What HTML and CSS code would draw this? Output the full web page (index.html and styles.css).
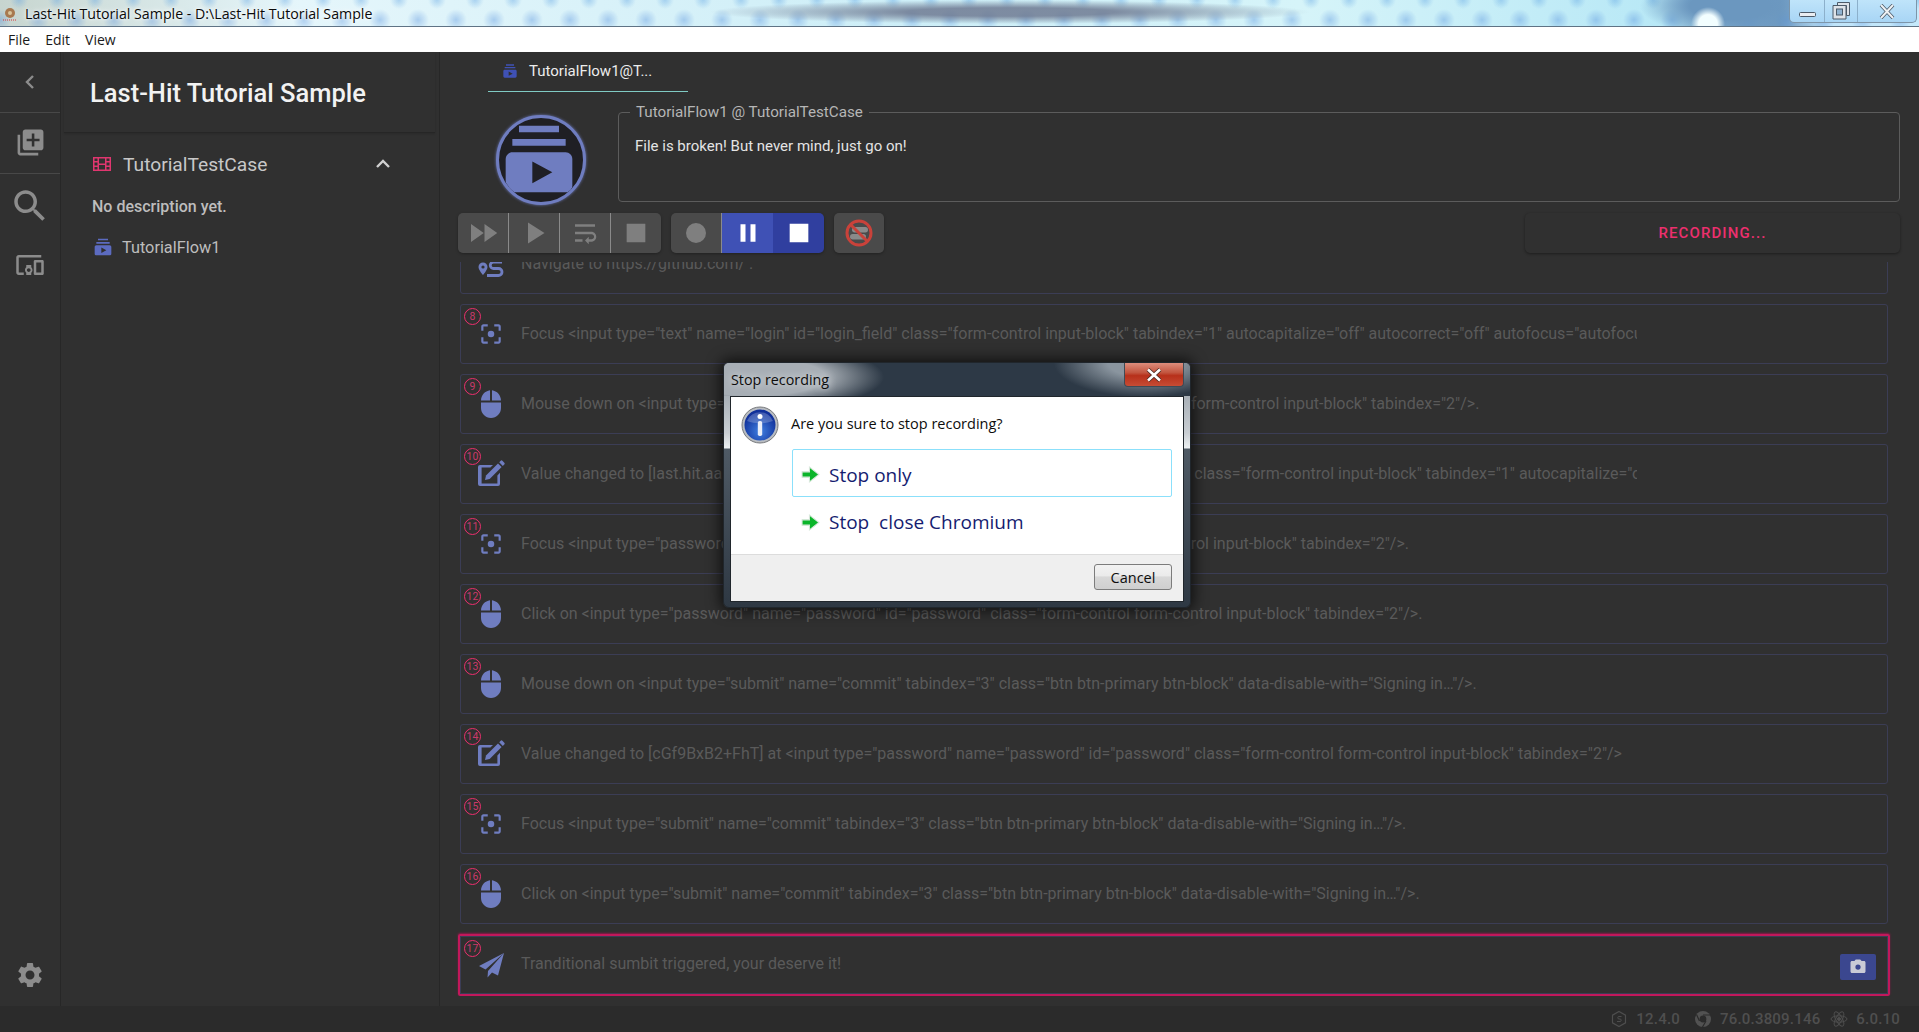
FILE: index.html
```html
<!DOCTYPE html>
<html lang="en">
<head>
<meta charset="utf-8">
<title>Last-Hit Tutorial Sample</title>
<link rel="stylesheet" href="styles.css">
</head>
<body>
<svg class="defs" width="0" height="0" aria-hidden="true">
  <symbol id="i-flow" viewBox="0 0 24 24"><path d="M20 8H4V6h16v2zm-2-6H6v2h12V2zm4 10v8c0 1.1-.9 2-2 2H4c-1.1 0-2-.9-2-2v-8c0-1.1.9-2 2-2h16c1.1 0 2 .9 2 2zm-6 4l-6-3.27v6.53L16 16z"/></symbol>
  <symbol id="i-focus" viewBox="0 0 24 24"><path d="M5 15H3v4c0 1.1.9 2 2 2h4v-2H5v-4zM5 5h4V3H5c-1.1 0-2 .9-2 2v4h2V5zm14-2h-4v2h4v4h2V5c0-1.1-.9-2-2-2zm0 16h-4v2h4c1.1 0 2-.9 2-2v-4h-2v4z"/><circle cx="12" cy="12" r="3"/></symbol>
  <symbol id="i-mouse" viewBox="0 0 20 28"><path d="M11 0.2C16 1 19.8 4.800 20 10.500H11zM9 0.200V10.500H0C0.200 4.800 4 1 9 0.200zM0 12.500H20V18C20 23.500 15.500 28 10 28S0 23.500 0 18z"/></symbol>
  <symbol id="i-edit" viewBox="0 0 28 28"><path d="M3 6h13l-2.600 2.600H4.600v15.800h15.800v-8l2.600-2.600V25a2 2 0 0 1-2 2H3a2 2 0 0 1-2-2V8a2 2 0 0 1 2-2z"/><path d="M9 16.500L21 4.500l3.600 3.600L12.600 20.100l-4.600 1z"/><path d="M22.200 3.300l1.500-1.500a1.200 1.200 0 0 1 1.700 0l1.900 1.900a1.200 1.200 0 0 1 0 1.700l-1.500 1.500z"/></symbol>
  <symbol id="i-plane" viewBox="0 0 26 26"><path d="M25 1L0 14l6.500 3.500L25 1zM25 1L9 19l-0.500 6.500 4.500-5 6 3z"/></symbol>
</svg>

<header class="titlebar">
  <svg class="app-icon" viewBox="0 0 16 16"><circle cx="8" cy="8" r="5" fill="#a8794f"/><circle cx="8" cy="8" r="2" fill="#d9c49a"/><path d="M1 15h14" stroke="#d33" stroke-dasharray="1 1"/></svg>
  <span class="title-text">Last-Hit Tutorial Sample - D:\Last-Hit Tutorial Sample</span>
  <div class="win-buttons">
    <span class="win-btn win-min"><svg width="17" height="6" viewBox="0 0 17 6"><rect x="0.500" y="0.500" width="16" height="4" rx="1" fill="#e9edf2" stroke="#4c5a68"/></svg></span>
    <span class="win-btn win-max"><svg width="18" height="18" viewBox="0 0 18 18"><path d="M5.500 0.500h12v13h-3v-10h-9z" fill="#dde2e8" stroke="#4c5a68"/><path d="M1 3.500h13v13.500H1z" fill="#dde2e8" stroke="#4c5a68"/><rect x="4.500" y="7" width="6" height="6" fill="#8fb2d0" stroke="#4c5a68"/></svg></span>
    <span class="win-btn win-close"><svg width="16" height="15" viewBox="0 0 16 15"><path d="M2 1l12 13M14 1L2 14" fill="none" stroke="#4c5a68" stroke-width="3.600"/><path d="M2 1l12 13M14 1L2 14" fill="none" stroke="#eef1f4" stroke-width="2"/></svg></span>
  </div>
</header>

<nav class="menubar"><span>File</span><span>Edit</span><span>View</span></nav>

<div class="app">
  <aside class="rail">
    <div class="rail-item rail-back"><svg width="24" height="24" viewBox="0 0 24 24"><path d="M15 6l-6 6 6 6" fill="none" stroke="#8c8c8c" stroke-width="2.400"/></svg></div>
    <div class="rail-item rail-add"><svg width="31" height="31" viewBox="0 0 24 24"><path d="M4 6H2v14c0 1.100.9 2 2 2h14v-2H4V6zm16-4H8c-1.100 0-2 .9-2 2v12c0 1.100.9 2 2 2h12c1.100 0 2-.9 2-2V4c0-1.100-.9-2-2-2zm-1 9h-4v4h-2v-4H9V9h4V5h2v4h4v2z"/></svg></div>
    <div class="rail-item rail-search"><svg width="42" height="42" viewBox="0 0 24 24"><path d="M15.500 14h-.79l-.28-.27C15.410 12.590 16 11.110 16 9.500 16 5.910 13.090 3 9.500 3S3 5.910 3 9.500 5.910 16 9.500 16c1.610 0 3.090-.59 4.230-1.570l.27.28v.79l5 4.990L20.490 19l-4.990-5zm-6 0C7.010 14 5 11.990 5 9.500S7.010 5 9.500 5 14 7.010 14 9.500 11.990 14 9.500 14z"/></svg></div>
    <div class="rail-item rail-devices"><svg width="30" height="30" viewBox="0 0 24 24"><path d="M3 6h18V4H3c-1.100 0-2 .9-2 2v12c0 1.100.9 2 2 2h4v-2H3V6zm10 6H9v1.780c-.61.550-1 1.330-1 2.220s.39 1.670 1 2.220V20h4v-1.780c.61-.55 1-1.340 1-2.220s-.39-1.670-1-2.220V12zm-2 5.500c-.83 0-1.500-.67-1.500-1.500s.67-1.500 1.500-1.500 1.500.67 1.500 1.500-.67 1.500-1.500 1.500zM22 8h-6c-.5 0-1 .5-1 1v10c0 .5.5 1 1 1h6c.5 0 1-.5 1-1V9c0-.5-.5-1-1-1zm-1 10h-4v-8h4v8z"/></svg></div>
    <div class="rail-item rail-settings"><svg width="30" height="30" viewBox="0 0 24 24"><path d="M19.140 12.940c.04-.3.06-.61.06-.94 0-.32-.02-.64-.07-.94l2.030-1.580c.18-.14.23-.41.12-.61l-1.920-3.320c-.12-.22-.37-.29-.59-.22l-2.390.96c-.5-.38-1.030-.7-1.620-.94l-.36-2.540c-.04-.24-.24-.41-.48-.41h-3.840c-.24 0-.43.17-.47.41l-.36 2.540c-.59.24-1.130.57-1.620.94l-2.390-.96c-.22-.08-.47 0-.59.22L2.740 8.870c-.12.210-.08.47.12.61l2.030 1.580c-.05.3-.09.63-.09.94s.02.64.07.94l-2.030 1.580c-.18.14-.23.41-.12.61l1.920 3.320c.12.220.37.290.59.220l2.390-.96c.5.38 1.030.7 1.620.94l.36 2.540c.05.24.24.41.48.41h3.840c.24 0 .44-.17.47-.41l.36-2.540c.59-.24 1.130-.56 1.620-.94l2.390.96c.22.08.47 0 .59-.22l1.920-3.320c.12-.22.07-.47-.12-.61l-2.010-1.580zM12 15.600c-1.980 0-3.600-1.620-3.600-3.600s1.620-3.600 3.600-3.600 3.600 1.620 3.600 3.600-1.620 3.600-3.600 3.600z"/></svg></div>
  </aside>

  <section class="panel">
    <h1 class="panel-title">Last-Hit Tutorial Sample</h1>
    <div class="case-row">
      <svg class="case-icon" viewBox="0 0 18 14"><path d="M0 0h18v14H0zM1.500 1.500v2.500h3V1.500zm0 4v3h3v-3zm0 4.500v2.500h3V10zm12-8.500v2.500h3V1.500zm0 4v3h3v-3zm0 4.500v2.500h3V10zM6 1.500v5h6v-5zm0 6.500v4.500h6V8z" fill-rule="evenodd"/></svg>
      <span class="case-name">TutorialTestCase</span>
      <svg class="case-chevron" width="24" height="24" viewBox="0 0 24 24"><path d="M6 15l6-6 6 6" fill="none" stroke="#d0d0d0" stroke-width="2.400"/></svg>
    </div>
    <p class="case-desc">No description yet.</p>
    <div class="flow-row">
      <svg class="flow-icon" width="20" height="20"><use href="#i-flow"/></svg>
      <span>TutorialFlow1</span>
    </div>
  </section>

  <main class="main">
    <div class="tabs">
      <div class="tab"><svg class="tab-icon" width="16" height="16"><use href="#i-flow"/></svg><span>TutorialFlow1@T...</span></div>
    </div>
    <div class="head">
      <div class="avatar"><svg width="80" height="80" viewBox="0 0 24 24"><use href="#i-flow"/></svg></div>
      <fieldset class="desc">
        <legend>TutorialFlow1 @ TutorialTestCase</legend>
        <p>File is broken! But never mind, just go on!</p>
      </fieldset>
    </div>
    <div class="toolbar">
      <div class="btn-group">
        <button class="tbtn"><svg width="36" height="36" viewBox="0 0 24 24"><path d="M4 18l8.500-6L4 6v12zm9-12v12l8.500-6L13 6z"/></svg></button>
        <button class="tbtn"><svg width="36" height="36" viewBox="0 0 24 24"><path d="M8 5v14l11-7z"/></svg></button>
        <button class="tbtn"><svg width="30" height="30" viewBox="0 0 24 24"><path d="M4 19h6v-2H4v2zM20 5H4v2h16V5zm-3 6H4v2h13.250c1.100 0 2 .9 2 2s-.9 2-2 2H15v-2l-3 3 3 3v-2h2c2.210 0 4-1.790 4-4s-1.790-4-4-4z"/></svg></button>
        <button class="tbtn"><svg width="28" height="28" viewBox="0 0 24 24"><path d="M4 4h16v16H4z"/></svg></button>
      </div>
      <div class="btn-group">
        <button class="tbtn"><svg width="24" height="24" viewBox="0 0 24 24"><circle cx="12" cy="12" r="10"/></svg></button>
        <button class="tbtn tbtn-pause"><svg width="30" height="30" viewBox="0 0 24 24"><path d="M6 19h4V5H6v14zm8-14v14h4V5h-4z"/></svg></button>
        <button class="tbtn tbtn-stop"><svg width="28" height="28" viewBox="0 0 24 24"><path d="M4 4h16v16H4z"/></svg></button>
      </div>
      <div class="btn-group">
        <button class="tbtn tbtn-block"><svg width="28" height="28" viewBox="0 0 28 28"><rect x="7" y="8" width="16" height="5.500" rx="2.700" fill="#8a8a8a"/><rect x="5" y="15" width="16" height="5.500" rx="2.700" fill="#8a8a8a"/><circle cx="14" cy="14" r="12" fill="none" stroke="#c9423a" stroke-width="3"/><path d="M5.500 5.500l17 17" stroke="#c9423a" stroke-width="3"/></svg></button>
      </div>
      <div class="status-box">RECORDING...</div>
    </div>
    <div class="steps">
      <div class="step"><svg class="step-icon icon-route" width="26" height="18" viewBox="0 0 26 18"><path d="M5 2.500a4.500 4.500 0 0 1 4.500 4.500C9.500 10 5 15 5 15S.5 10 .5 7A4.500 4.500 0 0 1 5 2.500z"/><circle cx="5" cy="7" r="1.600" fill="#303030"/><path d="M24 2H15.500a3 3 0 0 0 0 6.500h5a3 3 0 0 1 0 7H9" fill="none" stroke-width="2.800"/></svg><span class="step-text">Navigate to https://github.com/ .</span></div>
      <div class="step"><span class="badge">8</span><svg class="step-icon icon-focus" width="26" height="26"><use href="#i-focus"/></svg><span class="step-text">Focus &lt;input type="text" name="login" id="login_field" class="form-control input-block" tabindex="1" autocapitalize="off" autocorrect="off" autofocus="autofocus"/&gt;.</span></div>
      <div class="step"><span class="badge">9</span><svg class="step-icon icon-mouse" width="20" height="28"><use href="#i-mouse"/></svg><span class="step-text">Mouse down on &lt;input type="password" name="password" id="password" class="form-control form-control input-block" tabindex="2"/&gt;.</span></div>
      <div class="step"><span class="badge">10</span><svg class="step-icon icon-edit" width="28" height="28"><use href="#i-edit"/></svg><span class="step-text">Value changed to [last.hit.aaron@gmail.com] at &lt;input type="text" name="login" id="login_field" class="form-control input-block" tabindex="1" autocapitalize="off" autocorrect="off"/&gt;</span></div>
      <div class="step"><span class="badge">11</span><svg class="step-icon icon-focus" width="26" height="26"><use href="#i-focus"/></svg><span class="step-text">Focus &lt;input type="password" name="password" id="password" class="form-control form-control input-block" tabindex="2"/&gt;.</span></div>
      <div class="step"><span class="badge">12</span><svg class="step-icon icon-mouse" width="20" height="28"><use href="#i-mouse"/></svg><span class="step-text">Click on &lt;input type="password" name="password" id="password" class="form-control form-control input-block" tabindex="2"/&gt;.</span></div>
      <div class="step"><span class="badge">13</span><svg class="step-icon icon-mouse" width="20" height="28"><use href="#i-mouse"/></svg><span class="step-text">Mouse down on &lt;input type="submit" name="commit" tabindex="3" class="btn btn-primary btn-block" data-disable-with="Signing in…"/&gt;.</span></div>
      <div class="step"><span class="badge">14</span><svg class="step-icon icon-edit" width="28" height="28"><use href="#i-edit"/></svg><span class="step-text">Value changed to [cGf9BxB2+FhT] at &lt;input type="password" name="password" id="password" class="form-control form-control input-block" tabindex="2"/&gt;</span></div>
      <div class="step"><span class="badge">15</span><svg class="step-icon icon-focus" width="26" height="26"><use href="#i-focus"/></svg><span class="step-text">Focus &lt;input type="submit" name="commit" tabindex="3" class="btn btn-primary btn-block" data-disable-with="Signing in…"/&gt;.</span></div>
      <div class="step"><span class="badge">16</span><svg class="step-icon icon-mouse" width="20" height="28"><use href="#i-mouse"/></svg><span class="step-text">Click on &lt;input type="submit" name="commit" tabindex="3" class="btn btn-primary btn-block" data-disable-with="Signing in…"/&gt;.</span></div>
      <div class="step step-current"><span class="badge">17</span><svg class="step-icon icon-plane" width="26" height="26"><use href="#i-plane"/></svg><span class="step-text">Tranditional sumbit triggered, your deserve it!</span>
        <button class="shot"><svg width="18" height="18" viewBox="0 0 24 24"><path fill="#c9cbd6" d="M9 2L7.170 4H4c-1.100 0-2 .9-2 2v12c0 1.100.9 2 2 2h16c1.100 0 2-.9 2-2V6c0-1.100-.9-2-2-2h-3.170L15 2H9z"/><circle cx="12" cy="12" r="3.500" fill="#3b478f"/></svg></button>
      </div>
    </div>
  </main>
</div>

<footer class="statusbar">
  <span class="ver ver-node"><svg width="18" height="18" viewBox="0 0 18 18"><path d="M9 1.500l6.500 3.700v7.600L9 16.500l-6.500-3.700V5.200z" fill="none" stroke="#4e4e4e" stroke-width="1.200"/><path d="M11.500 6.500H9a1.200 1.200 0 0 0 0 2.500h1a1.200 1.200 0 0 1 0 2.500H7" fill="none" stroke="#4e4e4e"/></svg>12.4.0</span>
  <span class="ver"><svg width="18" height="18" viewBox="0 0 18 18"><circle cx="9" cy="9" r="8" fill="#525252"/><circle cx="9" cy="9" r="3.400" fill="#2b2b2b"/><path d="M9 5h7M5.500 11L2.500 4.500M12 11l-3.500 6" stroke="#2b2b2b" stroke-width="1.200"/></svg>76.0.3809.146</span>
  <span class="ver"><svg width="18" height="18" viewBox="0 0 18 18" fill="none" stroke="#4e4e4e" stroke-width="1"><ellipse cx="9" cy="9" rx="8" ry="3.200"/><ellipse cx="9" cy="9" rx="8" ry="3.200" transform="rotate(60 9 9)"/><ellipse cx="9" cy="9" rx="8" ry="3.200" transform="rotate(120 9 9)"/><circle cx="9" cy="9" r="1.500" fill="#4e4e4e"/></svg>6.0.10</span>
</footer>

<div class="dialog">
  <div class="dlg-title"><span>Stop recording</span><span class="dlg-close"><svg width="16" height="14" viewBox="0 0 16 14"><path d="M2 1.500l12 11M14 1.500L2 12.500" stroke="#4b2a22" stroke-width="4.200"/><path d="M2 1.500l12 11M14 1.500L2 12.500" stroke="#fff" stroke-width="2.600"/></svg></span></div>
  <div class="dlg-body">
    <div class="dlg-msg">
      <svg class="dlg-info" width="38" height="38" viewBox="0 0 38 38"><defs><radialGradient id="infoBlue" cx="50%" cy="70%" r="60%"><stop offset="0" stop-color="#3f7fe0"/><stop offset="1" stop-color="#10309a"/></radialGradient></defs><circle cx="19" cy="19" r="18" fill="#b9bdc2" stroke="#77797c"/><circle cx="19" cy="19" r="15.500" fill="url(#infoBlue)"/><path d="M6 15a14 14 0 0 1 26 0c-8 3-18 3-26 0z" fill="#fff" opacity=".22"/><circle cx="19" cy="10.500" r="2.500" fill="#fff"/><rect x="16.800" y="15" width="4.400" height="15" rx="1.800" fill="#e9eef8"/></svg>
      <span>Are you sure to stop recording?</span>
    </div>
    <div class="dlg-link dlg-link-hot"><svg width="19" height="17" viewBox="0 0 18 16"><path d="M1 5.500h7V1l9 7-9 7v-4.500H1z" fill="#0bb52a" stroke="#d9e8dc"/></svg><span>Stop only</span></div>
    <div class="dlg-link"><svg width="19" height="17" viewBox="0 0 18 16"><path d="M1 5.500h7V1l9 7-9 7v-4.500H1z" fill="#0bb52a" stroke="#d9e8dc"/></svg><span>Stop&nbsp; close Chromium</span></div>
    <div class="dlg-foot"><button class="dlg-cancel">Cancel</button></div>
  </div>
</div>
</body>
</html>
```

FILE: styles.css
```css
* { box-sizing: border-box; }
html, body { margin: 0; height: 100%; overflow: hidden; }
body {
  display: flex;
  flex-direction: column;
  font-family: Roboto, "Liberation Sans", sans-serif;
  background: #303030;
  position: relative;
}
.defs { position: absolute; }

.titlebar {
  height: 27px;
  flex: none;
  display: flex;
  align-items: center;
  border-bottom: 1px solid #5f7385;
  position: relative;
  background:
    radial-gradient(circle 17px at 1708px 24px, #f2feff 55%, transparent 100%) no-repeat,
    radial-gradient(ellipse 90px 30px at 1730px 6px, #6b97bf 45%, transparent 100%) no-repeat,
    radial-gradient(ellipse 300px 12px at 1010px 12px, rgba(105,115,140,.8) 35%, transparent 100%) no-repeat,
    radial-gradient(circle 9px at 19px 0, rgba(90,160,225,.4) 0, transparent 100%) 0 0 / 38px 27px repeat-x,
    radial-gradient(circle 11px at 19px 20px, rgba(80,140,220,.38) 0, transparent 100%) 19px 0 / 38px 27px repeat-x,
    linear-gradient(90deg, #c7d5cf 0, #e5f6fb 300px, #cdeef7 900px, #d6f4f9 1300px, #b8e8f6 1660px, #77a5cb 1740px, #6f9bc2 1780px, #bfe4fa 1830px, #c5e9fb 100%);
  font-family: "Open Sans", "Noto Sans", sans-serif;
  font-size: 14.200px;
  color: #0a0a0a;
}
.app-icon { width: 16px; height: 16px; margin-left: 2px; flex: none; }
.title-text { margin-left: 7px; white-space: nowrap; text-shadow: 0 0 6px #fff, 0 0 3px #fff; }
.win-buttons {
  position: absolute;
  right: 2px;
  top: 0;
  height: 23px;
  display: flex;
  border: 1px solid #7d95a9;
  border-top: 0;
  border-radius: 0 0 5px 5px;
  background: linear-gradient(180deg, #bfe4fa, #a8d5f5);
}
.win-btn { display: flex; align-items: center; justify-content: center; border-right: 1px solid #8cb0cb; }
.win-btn:last-child { border-right: 0; }
.win-min { width: 35px; padding-top: 7px; }
.win-max { width: 33px; }
.win-close { width: 58px; }

.menubar {
  height: 25px;
  flex: none;
  background: #fff;
  display: flex;
  align-items: center;
  gap: 15px;
  padding-left: 8px;
  padding-bottom: 1px;
  font-family: "Open Sans", "Noto Sans", sans-serif;
  font-size: 14px;
  color: #1a1a1a;
}

.app { flex: 1; display: flex; min-height: 0; }

.rail {
  width: 61px;
  flex: none;
  display: flex;
  flex-direction: column;
  border-right: 1px solid #272727;
}
.rail svg { fill: #8c8c8c; }
.rail-item { display: flex; align-items: center; justify-content: center; }
.rail-back { height: 61px; border-bottom: 1px solid #484848; }
.rail-add { height: 61px; padding-bottom: 2px; border-bottom: 1px solid #484848; }
.rail-search { height: 63px; }
.rail-devices { height: 56px; }
.rail-settings { margin-top: auto; height: 66px; margin-bottom: -2px; }

.panel {
  width: 379px;
  flex: none;
  border-right: 1px solid #272727;
  display: flex;
  flex-direction: column;
}
.panel-title {
  margin: 0 4px 0 3px;
  height: 81px;
  padding: 23px 0 0 26px;
  font-size: 25.500px;
  line-height: 36px;
  font-weight: 500;
  color: #f2f2f2;
  border-bottom: 1px solid #262626;
  box-shadow: 0 1px 2px rgba(0,0,0,.15);
}
.case-row {
  display: flex;
  align-items: center;
  height: 24px;
  margin-top: 19px;
  padding-left: 32px;
}
.case-icon { fill: #e0366f; flex: none; width: 18px; height: 14px; }
.case-name { margin-left: 12px; font-size: 19.200px; color: #c8c8c8; }
.case-chevron { margin-left: auto; margin-right: 44px; }
.case-desc { margin: 21px 0 0 31px; font-size: 16px; line-height: 20px; font-weight: 500; color: #bdbdbd; }
.flow-row {
  display: flex;
  align-items: center;
  height: 24px;
  margin-top: 18px;
  padding-left: 32px;
  font-size: 16.300px;
  color: #bdbdbd;
}
.flow-icon { fill: #5c6bc0; flex: none; margin-right: 9px; }

.main { flex: 1; min-width: 0; display: flex; flex-direction: column; }

.tabs { height: 40px; flex: none; padding-left: 48px; }
.tab {
  width: 200px;
  height: 40px;
  display: flex;
  align-items: center;
  padding-left: 14px;
  padding-bottom: 2px;
  border-bottom: 1px solid #80cbc4;
  font-size: 15px;
  color: #ececec;
}
.tab-icon { fill: #3f51b5; margin-right: 11px; flex: none; }

.head { height: 121px; flex: none; display: flex; }
.avatar {
  width: 90px;
  height: 90px;
  margin: 23px 0 0 56px;
  flex: none;
  border-radius: 50%;
  border: 3px solid #6f7dc0;
  box-shadow: 0 0 3px #6f7dc0;
  background: #1f1f24;
  display: flex;
  align-items: center;
  justify-content: center;
  overflow: hidden;
}
.avatar svg { fill: #6f7dc0; flex: none; margin: -3px 5px 0 0; }
.desc {
  flex: 1;
  margin: 9px 19px 0 32px;
  height: 101px;
  padding: 13px 16px 0 16px;
  border: 1px solid #5c5c5c;
  border-radius: 4px;
  min-width: 0;
}
.desc legend { padding: 0 6px; margin-left: -5px; font-size: 15.200px; color: #b6b6b6; line-height: 22px; }
.desc p { margin: 0; font-size: 15px; line-height: 20px; color: #e4e4e4; }

.toolbar { height: 40px; flex: none; display: flex; gap: 10px; padding: 0 19px 0 18px; }
.btn-group { display: flex; border-radius: 5px; overflow: hidden; box-shadow: 0 1px 3px rgba(0,0,0,.3); }
.tbtn {
  width: 51px;
  height: 40px;
  padding: 0;
  border: 0;
  border-right: 1px solid #8a8a8a;
  background: #4a4a4a;
  display: flex;
  align-items: center;
  justify-content: center;
}
.tbtn:last-child { border-right: 0; width: 50px; }
.tbtn svg { fill: #7f7f7f; }
.tbtn-pause { background: #3f51b5; border-right: 0; }
.tbtn.tbtn-stop { background: #303f9f; width: 51px; }
.tbtn-pause svg, .tbtn-stop svg { fill: #fff; }
.status-box {
  margin-left: auto;
  width: 375px;
  height: 40px;
  border-radius: 5px;
  background: #303030;
  box-shadow: 0 1px 3px rgba(0,0,0,.4);
  display: flex;
  align-items: center;
  justify-content: center;
  font-size: 15px;
  font-weight: 500;
  letter-spacing: 1.100px;
  color: #ec2f6e;
}

.steps {
  flex: 1;
  min-height: 0;
  margin-top: 9px;
  padding: 0 31px 10px 20px;
  display: flex;
  flex-direction: column;
  justify-content: flex-end;
  gap: 10px;
  overflow: hidden;
}
.step {
  position: relative;
  flex: none;
  height: 60px;
  padding-bottom: 2px;
  display: flex;
  align-items: center;
  border: 1px solid #3b3d55;
  border-radius: 3px;
}
.step-icon { fill: #6f7dc0; stroke: #6f7dc0; stroke-width: 0; position: absolute; }
.icon-focus { left: 17px; top: 16px; }
.icon-mouse { left: 20px; top: 15px; }
.icon-edit { left: 16px; top: 14px; }
.icon-route { left: 17px; top: 25px; }
.icon-route path:last-child { stroke-width: 2.800; }
.step-text {
  margin-left: 60px;
  width: 1116px;
  white-space: nowrap;
  overflow: hidden;
  font-size: 16px;
  color: #5a5a5a;
}
.badge {
  position: absolute;
  left: 3px;
  top: 3px;
  width: 17px;
  height: 17px;
  border: 1px solid #ec2f6e;
  border-radius: 50%;
  display: flex;
  align-items: center;
  justify-content: center;
  font-size: 10.500px;
  color: #c83a6a;
}
.step-current {
  height: 62px;
  margin: 0 -2px;
  padding-bottom: 4px;
  border: 2px solid #c2185b;
  border-radius: 2px;
  box-shadow: inset 0 0 0 1px #3b3d55, 0 -1px 2px #8e1a4a;
}
.step-current .step-text { margin-left: 61px; }
.step-current .badge { left: 4px; top: 4px; }
.icon-plane { left: 19px; top: 16px; }
.shot {
  position: absolute;
  right: 12px;
  top: 18px;
  width: 36px;
  height: 26px;
  padding: 0;
  border: 0;
  border-radius: 2px;
  background: #3b478f;
  display: flex;
  align-items: center;
  justify-content: center;
}

.statusbar {
  height: 26px;
  flex: none;
  background: #2b2b2b;
  display: flex;
  align-items: center;
  justify-content: flex-end;
  gap: 10px;
  padding-right: 19px;
  font-size: 15px;
  font-weight: 500;
  letter-spacing: .2px;
  color: #4f4f4f;
}
.ver { display: flex; align-items: center; gap: 8px; }
.ver-node { margin-right: 4px; }

.dialog {
  position: absolute;
  left: 723px;
  top: 362px;
  width: 468px;
  height: 246px;
  padding: 0 6px 6px 6px;
  border: 1px solid #20262c;
  border-radius: 6px;
  background: linear-gradient(180deg, #8b959e 0, #c9ced3 70px, #ecf0f2 85px, #4f5a65 86px, #2e3843 100%);
  box-shadow: 0 0 14px 3px rgba(0,0,0,.65);
  font-family: "Open Sans", "Noto Sans", sans-serif;
}
.dlg-title {
  height: 33px;
  display: flex;
  padding: 7px 0 0 7px;
  margin: 0 -6px;
  font-size: 14.300px;
  color: #0d0d0d;
  border-radius: 5px 5px 0 0;
  background:
    radial-gradient(ellipse 130px 34px at 30px 14px, #a7aeb5 55%, transparent 100%),
    radial-gradient(ellipse 90px 34px at 420px 0, #8a959f 40%, transparent 100%),
    #2d3946;
}
.dlg-title > span:first-child { text-shadow: 0 0 8px #fff; }
.dlg-close {
  margin-left: auto;
  margin-right: 6px;
  margin-top: -7px;
  width: 60px;
  height: 24px;
  border: 1px solid #3f4a55;
  border-top: 0;
  border-radius: 0 0 4px 4px;
  background: linear-gradient(180deg, #dd8d7c 0, #c2553f 42%, #b7301a 55%, #c74c34 100%);
  display: flex;
  align-items: center;
  justify-content: center;
}
.dlg-body {
  height: 206px;
  background: #fff;
  border: 1px solid #20262c;
  display: flex;
  flex-direction: column;
}
.dlg-msg {
  display: flex;
  align-items: center;
  height: 52px;
  padding-left: 10px;
  gap: 12px;
  font-size: 14.500px;
  color: #0d0d0d;
  flex: none;
}
.dlg-info { margin-top: 3px; }
.dlg-link {
  height: 48px;
  margin: 0 11px 1px 61px;
  flex: none;
  display: flex;
  align-items: center;
  padding-left: 8px;
  gap: 9px;
  border: 1px solid transparent;
  border-radius: 2px;
  font-size: 19px;
  color: #151c70;
}
.dlg-link-hot { border-color: #8be0fb; padding-top: 3px; }
.dlg-foot {
  margin-top: 7px;
  flex: 1;
  background: #efefef;
  border-top: 1px solid #dcdcdc;
  display: flex;
  justify-content: flex-end;
  align-items: flex-start;
  padding: 9px 11px 0 0;
}
.dlg-cancel {
  width: 78px;
  height: 26px;
  padding: 0;
  border: 1px solid #7c7c7c;
  border-radius: 3px;
  background: linear-gradient(180deg, #f2f2f2 0, #ebebeb 45%, #d8d8d8 50%, #cfcfcf 100%);
  font-family: inherit;
  font-size: 14.500px;
  color: #0d0d0d;
}
```
